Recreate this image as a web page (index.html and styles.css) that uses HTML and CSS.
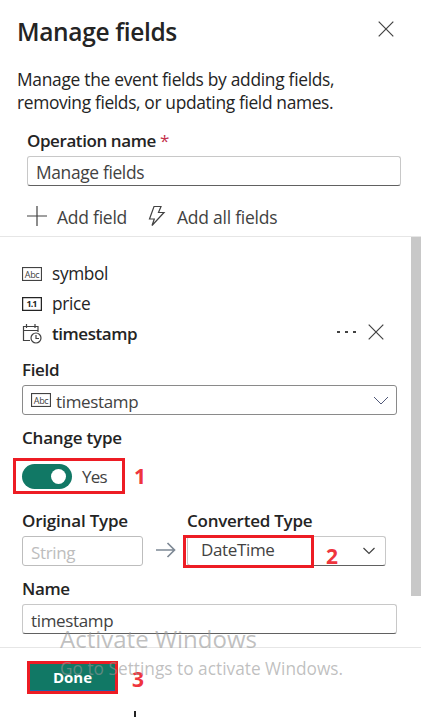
FILE: index.html
```html
<!DOCTYPE html>
<html lang="en">
<head>
<meta charset="utf-8">
<title>Manage fields</title>
<link rel="stylesheet" href="styles.css">
</head>
<body>
<div class="panel">
  <header class="header">
    <div class="title-row">
      <h1 class="title"><span>Manage fields</span></h1>
      <svg class="close" width="16" height="16" viewBox="0 0 16 16"><path d="M.7.7l14.6 14.6M15.3.7L.7 15.3"/></svg>
    </div>
    <p class="description"><span class="desc-a">Manage the event fields by adding fields,</span><br><span class="desc-b">removing fields, or updating field names.</span></p>
    <div class="operation">
      <div class="label"><span class="t-op">Operation name</span> <span class="required">*</span></div>
      <div class="input"><span class="t-mf">Manage fields</span></div>
      <div class="actions">
        <svg width="20" height="20" viewBox="0 0 20 20"><path d="M0 10h20M10 0v20"/></svg>
        <span class="t-add">Add field</span>
        <svg class="bolt" width="18" height="22" viewBox="0 0 18 22"><path d="M6 1.500H13l-2.500 6H16L4 20.500l2.300-6.500H1.500z"/></svg>
        <span class="t-all">Add all fields</span>
      </div>
    </div>
  </header>
  <main class="content">
    <div class="field-row">
      <svg class="type" width="20" height="14" viewBox="0 0 20 14"><rect x=".5" y=".5" width="19" height="13"/><text x="2.800" y="10.600" textLength="14.500">Abc</text></svg>
      <span class="t-symbol">symbol</span>
    </div>
    <div class="field-row">
      <svg class="type number" width="20" height="14" viewBox="0 0 20 14"><rect x=".5" y=".5" width="19" height="13"/><text x="4.500" y="10.200" textLength="10.500">1.1</text></svg>
      <span class="t-price">price</span>
    </div>
    <div class="field-row selected">
      <svg class="calendar" width="20" height="20" viewBox="0 0 20 20"><path d="M8 16.500H1.500v-14H16V8M1.500 6.500H16M4.500 0v4M13 0v4"/><circle cx="14" cy="14" r="5"/><path d="M14 11v3.500h3"/></svg>
      <span class="t-ts">timestamp</span>
      <svg class="dots" width="19" height="4" viewBox="0 0 19 4"><path d="M0 1h3v2H0zM8 1h3v2H8zM16 1h3v2h-3z"/></svg>
      <svg class="remove" width="16" height="16" viewBox="0 0 16 16"><path d="M.7.7l14.600 14.600M15.300.7L.7 15.300"/></svg>
    </div>
    <div class="label field-label"><span class="t-field">Field</span></div>
    <div class="input select">
      <svg class="type" width="20" height="14" viewBox="0 0 20 14"><rect x=".5" y=".5" width="19" height="13"/><text x="2.800" y="10.600" textLength="14.500">Abc</text></svg>
      <span class="t-sel">timestamp</span>
      <svg class="chevron" width="16" height="9" viewBox="0 0 16 9"><path d="M1 1l7 7 7-7"/></svg>
    </div>
    <div class="label change-label"><span class="t-change">Change type</span></div>
    <div class="toggle-row">
      <div class="marked"><i class="toggle"></i><span class="t-yes">Yes</span></div>
      <b class="step">1</b>
    </div>
    <div class="types">
      <div class="original">
        <div class="label"><span class="t-orig">Original Type</span></div>
        <div class="input disabled"><span class="t-string">String</span></div>
      </div>
      <svg class="arrow" width="20" height="16" viewBox="0 0 20 16"><path d="M0 8h18.500M11.500 1l7 7-7 7"/></svg>
      <div class="converted">
        <div class="label"><span class="t-conv">Converted Type</span></div>
        <div class="input">
          <span class="t-date">DateTime</span>
          <b class="step two">2</b>
          <svg class="chevron small" width="12" height="8" viewBox="0 0 12 8"><path d="M.5 1L6 6.500 11.500 1"/></svg>
          <i class="outline"></i>
        </div>
      </div>
    </div>
    <div class="label name-label"><span class="t-name">Name</span></div>
    <div class="input name-input"><span class="t-nts">timestamp</span></div>
    <i class="scrollbar"></i>
  </main>
  <footer class="footer">
    <button class="done"><span>Done</span></button>
    <b class="step">3</b>
    <i class="cursor"></i>
  </footer>
  <div class="watermark"><div class="wm-a"><span>Activate Windows</span></div><div class="wm-b"><span>Go to Settings to activate Windows.</span></div></div>
</div>
</body>
</html>
```
FILE: styles.css
```css
* { box-sizing: border-box; }
body { margin: 0; background: #fff; color: #242424; font: 17px/22px "Open Sans", "Noto Sans", sans-serif; overflow: hidden; }
svg { flex: none; fill: none; stroke: #424242; stroke-width: 1.2; }
span { white-space: nowrap; }
.panel { position: relative; width: 421px; height: 717px; overflow: hidden; }
.header { height: 237px; border-bottom: 1px solid #e6e6e6; }
.title-row { display: flex; justify-content: space-between; height: 68px; padding: 21px 27px 0 17px; }
.title { margin: -4px 0 0; font-size: 24.5px; line-height: 30px; font-weight: 600; letter-spacing: -.35px; }
.description { margin: 0 0 0 17px; font-size: 17.4px; line-height: 23px; height: 62px; }
.desc-a { letter-spacing: -.3px; }
.desc-b { letter-spacing: -.36px; }
.operation { padding: 0 20px 0 27px; }
.label { font-weight: 600; font-size: 17px; line-height: 22px; letter-spacing: -.35px; }
.t-op { letter-spacing: -.42px; }
.t-change { letter-spacing: -.2px; }
.t-orig { letter-spacing: -.2px; }
.t-conv { letter-spacing: -.25px; }
.required { color: #c4314b; font-weight: 400; }
.input { position: relative; display: flex; align-items: center; height: 30px; padding: 3px 8px 0; border: 1px solid #c8c8c8; border-bottom-color: #616161; border-radius: 3px; color: #424242; letter-spacing: -.35px; }
.operation .input { margin-top: 4px; }
.t-mf { margin-top: -1px; font-size: 17.4px; }
.actions { display: flex; align-items: center; height: 22px; margin-top: 19px; color: #424242; font-size: 17.5px; letter-spacing: -.25px; }
.actions span { margin: 2px 0 0 10px; }
.actions .bolt { margin-left: 21px; }
.actions .t-all { margin-left: 11px; }
.content { position: relative; height: 411px; padding: 22px 0 0 22px; border-bottom: 1px solid #e6e6e6; }
.field-row { display: flex; align-items: center; height: 30px; gap: 10px; letter-spacing: -.35px; }
.field-row .t-symbol, .field-row .t-price { font-size: 17.3px; }
.selected { font-weight: 600; letter-spacing: -.45px; }
.type text { fill: #424242; stroke: none; font: 9px "Open Sans", sans-serif; }
.number text { fill: #242424; font-weight: 700; }
.number rect { stroke: #242424; stroke-width: 1.5; }
.dots { margin: -5px 2px 0 auto; }
.dots path { fill: #424242; stroke: none; }
.remove { margin: -4px 37px 0 0; }
.field-label { margin-top: 10px; }
.select { width: 375px; margin-top: 4px; border-color: #8a8a8a; gap: 5px; }
.select .type { margin-top: -3px; }
.chevron { margin: -3px 0 0 auto; }
.select .chevron { margin-right: -1px; stroke: #505878; stroke-width: 1; }
.change-label { margin-top: 12px; }
.toggle-row { display: flex; align-items: center; height: 36px; margin: 9px 0 0 -9px; }
.marked { display: flex; align-items: center; width: 112px; height: 36px; padding-left: 6px; border: 3px solid #ed1c24; color: #424242; }
.toggle { width: 50px; height: 25px; padding: 5px 6px; border-radius: 13px; background: #117865; }
.toggle::before { content: ""; display: block; width: 15px; height: 15px; margin-left: 23px; border-radius: 50%; background: #fff; }
.t-yes { margin: 2px 0 0 10px; letter-spacing: -.8px; }
.step { margin-left: 9px; color: #ef353d; font: 700 21px/22px "Noto Sans", sans-serif; }
.types { display: flex; align-items: flex-start; height: 56px; margin-top: 16px; }
.original { width: 121px; }
.types .input { margin-top: 4px; }
.original .disabled { border-color: #bdbdbd; color: #bdbdbd; }
.arrow { margin: 32px 11px 0 13px; stroke: #7e8995; stroke-width: 1.7; }
.converted { width: 199px; }
.outline { position: absolute; left: -5px; top: -2px; width: 131px; height: 33px; border: 3px solid #ed1c24; }
.t-date { margin: -5px 0 0 5px; }
.step.two { position: absolute; left: 138px; top: 8px; margin: 0; }
.chevron.small { margin-right: 2px; }
.name-label { margin-top: 12px; }
.name-input { width: 375px; margin-top: 4px; }
.scrollbar { position: absolute; right: 0; top: 0; width: 10px; height: 359px; background: #c8c8c8; }
.footer { position: relative; display: flex; align-items: flex-start; height: 69px; padding: 13px 0 0 27px; }
.done { width: 91px; height: 33px; padding: 0 0 2px; border: 3px solid #ed1c24; background: #117865; box-shadow: inset 0 -1px #1769aa; color: #fff; font: 700 15px/24px "Open Sans", sans-serif; }
.footer .step { margin: 7px 0 0 14px; }
.cursor { position: absolute; left: 134px; top: 63px; width: 2px; height: 6px; background: #222; }
.watermark { position: absolute; left: 60px; top: 624px; color: rgba(150, 150, 150, .6); pointer-events: none; }
.wm-a { font-size: 24px; line-height: 30px; }
.wm-b { font-size: 17.3px; line-height: 30px; }
```
